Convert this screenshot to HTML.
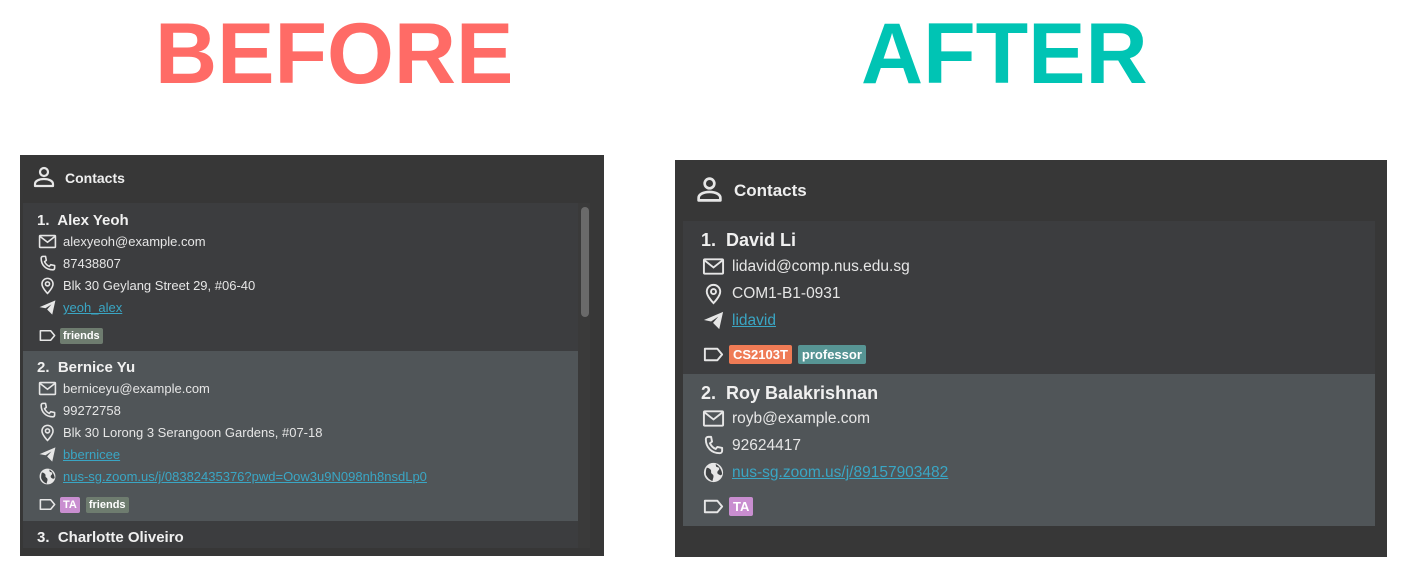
<!DOCTYPE html>
<html><head><meta charset="utf-8"><style>
*{margin:0;padding:0;box-sizing:border-box}
body{width:1405px;height:571px;background:#fff;position:relative;overflow:hidden;font-family:"Liberation Sans",sans-serif}
.t{position:absolute;font-weight:bold;font-size:86px;top:4px;line-height:100px}
.p{position:absolute;background:#373737}
.c{position:absolute;background:#3c3d3f}
.s{background:#505558}
.r{position:absolute;display:flex;align-items:center;color:#e6e6e6;white-space:nowrap}
.r svg{flex:none}
.a{color:#3aa6c4;text-decoration:underline}
.g{display:inline-block;color:#fff;border-radius:2px;margin-right:6px;font-weight:bold}
.n{color:#f0f0f0}
.q{margin-top:2px}
</style></head><body>
<div class="t" style="left:155px;color:#ff6b66">BEFORE</div>
<div class="t" style="left:861px;color:#00c4b4">AFTER</div>

<svg width="0" height="0" style="position:absolute"><defs>
<symbol id="m" viewBox="0 0 24 24"><rect x="2" y="4.5" width="20" height="15" rx="1" fill="none" stroke="#e6e6e6" stroke-width="2"/><path d="M2.5 5.5 12 13l9.5-7.5" fill="none" stroke="#e6e6e6" stroke-width="2"/></symbol>
<symbol id="ph" viewBox="0 0 24 24"><path d="M6.5 3 9.5 3 10.5 8 8.3 9.7c1.3 2.8 3.2 4.7 6 6L16 13.5 21 14.5v3c0 1.5-1 2.5-2.5 2.5C10 20 4 14 4 5.5 4 4 5 3 6.5 3z" fill="none" stroke="#e6e6e6" stroke-width="2" stroke-linejoin="round"/></symbol>
<symbol id="l" viewBox="0 0 24 24"><path d="M12 22s-7-7-7-12a7 7 0 0 1 14 0c0 5-7 12-7 12z" fill="none" stroke="#e6e6e6" stroke-width="2"/><circle cx="12" cy="10" r="2.6" fill="none" stroke="#e6e6e6" stroke-width="2"/></symbol>
<symbol id="tg" viewBox="0 0 24 24"><path d="M2 11.5 22 3 18 21 11.5 14.5 17 8 9.5 13z" fill="#e6e6e6"/></symbol>
<symbol id="w" viewBox="0 0 24 24"><circle cx="12" cy="12" r="10" fill="#e6e6e6"/><path d="M5 7c2 0 3 1 4 2s0 3 1 4 2 1 2 3-1 3-1 5c-3-1-6-4-7-7 0-3 0-5 1-7zM14 3c1 1 0 2 1 3s3 0 3 2-2 2-2 4 2 2 3 3l2-1c0-4-3-9-7-11z" fill="#3f4244"/></symbol>
<symbol id="tag" viewBox="0 0 24 24"><path d="M3 6h13l5 6-5 6H3z" fill="none" stroke="#e6e6e6" stroke-width="2" stroke-linejoin="round"/></symbol>
<symbol id="u" viewBox="0 0 24 24"><circle cx="12" cy="7" r="4" fill="none" stroke="#e6e6e6" stroke-width="2.2"/><path d="M3 21v-2c0-3 4-5 9-5s9 2 9 5v2z" fill="none" stroke="#e6e6e6" stroke-width="2.2" stroke-linejoin="round"/></symbol>
</defs></svg>

<!-- LEFT -->
<div class="p" style="left:20px;top:155px;width:584px;height:401px">
<div class="r" style="left:12px;top:10px;font-size:14px;font-weight:bold;color:#eee"><svg width="24" height="24" style="margin-right:9px"><use href="#u"/></svg><span class="q">Contacts</span></div>
<div class="c" style="left:3px;top:48px;width:555px;height:148px"></div>
<div class="c s" style="left:3px;top:196px;width:555px;height:170px"></div>
<div class="c" style="left:3px;top:366px;width:555px;height:27px"></div>
<div style="position:absolute;left:558px;top:48px;width:12px;height:345px;background:#3a3a3a"></div>
<div style="position:absolute;left:561px;top:52px;width:8px;height:110px;background:#6a6a6a;border-radius:4px"></div>
<div style="font-size:13px">
<div class="r n" style="left:17px;top:57px;font-size:15px;font-weight:bold">1.&nbsp; Alex Yeoh</div>
<div class="r" style="left:18px;top:77px"><svg width="19" height="19" style="margin-right:6px"><use href="#m"/></svg>alexyeoh@example.com</div>
<div class="r" style="left:18px;top:99px"><svg width="19" height="19" style="margin-right:6px"><use href="#ph"/></svg>87438807</div>
<div class="r" style="left:18px;top:121px"><svg width="19" height="19" style="margin-right:6px"><use href="#l"/></svg>Blk 30 Geylang Street 29, #06-40</div>
<div class="r" style="left:18px;top:143px"><svg width="19" height="19" style="margin-right:6px"><use href="#tg"/></svg><span class="a">yeoh_alex</span></div>
<div class="r" style="left:18px;top:171px"><svg width="19" height="19" style="margin-right:3px"><use href="#tag"/></svg><span class="g" style="background:#6e7c6f;font-size:11px;padding:2px 3px">friends</span></div>

<div class="r n" style="left:17px;top:204px;font-size:15px;font-weight:bold">2.&nbsp; Bernice Yu</div>
<div class="r" style="left:18px;top:224px"><svg width="19" height="19" style="margin-right:6px"><use href="#m"/></svg>berniceyu@example.com</div>
<div class="r" style="left:18px;top:246px"><svg width="19" height="19" style="margin-right:6px"><use href="#ph"/></svg>99272758</div>
<div class="r" style="left:18px;top:268px"><svg width="19" height="19" style="margin-right:6px"><use href="#l"/></svg>Blk 30 Lorong 3 Serangoon Gardens, #07-18</div>
<div class="r" style="left:18px;top:290px"><svg width="19" height="19" style="margin-right:6px"><use href="#tg"/></svg><span class="a">bbernicee</span></div>
<div class="r" style="left:18px;top:312px"><svg width="19" height="19" style="margin-right:6px"><use href="#w"/></svg><span class="a">nus-sg.zoom.us/j/08382435376?pwd=Oow3u9N098nh8nsdLp0</span></div>
<div class="r" style="left:18px;top:340px"><svg width="19" height="19" style="margin-right:3px"><use href="#tag"/></svg><span class="g" style="background:#c98ed0;font-size:11px;padding:2px 3px">TA</span><span class="g" style="background:#6e7c6f;font-size:11px;padding:2px 3px">friends</span></div>

<div class="r n" style="left:17px;top:374px;font-size:15px;font-weight:bold">3.&nbsp; Charlotte Oliveiro</div>
</div>
</div>

<!-- RIGHT -->
<div class="p" style="left:675px;top:160px;width:712px;height:397px">
<div class="r" style="left:20px;top:15px;font-size:17px;font-weight:bold;color:#eee"><svg width="29" height="29" style="margin-right:10px"><use href="#u"/></svg><span class="q">Contacts</span></div>
<div class="c" style="left:8px;top:61px;width:692px;height:153px"></div>
<div class="c s" style="left:8px;top:214px;width:692px;height:152px"></div>
<div style="font-size:15.5px">
<div class="r n" style="left:26px;top:70px;font-size:18px;font-weight:bold">1.&nbsp; David Li</div>
<div class="r" style="left:27px;top:95px"><svg width="23" height="23" style="margin-right:7px"><use href="#m"/></svg>lidavid@comp.nus.edu.sg</div>
<div class="r" style="left:27px;top:122px"><svg width="23" height="23" style="margin-right:7px"><use href="#l"/></svg>COM1-B1-0931</div>
<div class="r" style="left:27px;top:149px"><svg width="23" height="23" style="margin-right:7px"><use href="#tg"/></svg><span class="a">lidavid</span></div>
<div class="r" style="left:27px;top:183px"><svg width="23" height="23" style="margin-right:4px"><use href="#tag"/></svg><span class="g" style="background:#ef7b55;font-size:13px;padding:2px 4px">CS2103T</span><span class="g" style="background:#579594;font-size:13px;padding:2px 4px">professor</span></div>

<div class="r n" style="left:26px;top:223px;font-size:18px;font-weight:bold">2.&nbsp; Roy Balakrishnan</div>
<div class="r" style="left:27px;top:247px"><svg width="23" height="23" style="margin-right:7px"><use href="#m"/></svg>royb@example.com</div>
<div class="r" style="left:27px;top:274px"><svg width="23" height="23" style="margin-right:7px"><use href="#ph"/></svg>92624417</div>
<div class="r" style="left:27px;top:301px"><svg width="23" height="23" style="margin-right:7px"><use href="#w"/></svg><span class="a">nus-sg.zoom.us/j/89157903482</span></div>
<div class="r" style="left:27px;top:335px"><svg width="23" height="23" style="margin-right:4px"><use href="#tag"/></svg><span class="g" style="background:#c98ed0;font-size:13px;padding:2px 4px">TA</span></div>
</div>
</div>
</body></html>
